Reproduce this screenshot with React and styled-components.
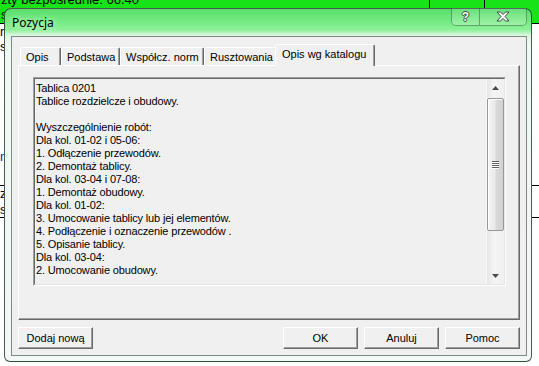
import styled, { createGlobalStyle } from "styled-components";

const GlobalStyle = createGlobalStyle`
  html, body {
    margin: 0;
    padding: 0;
  }
  body {
    width: 539px;
    height: 366px;
    overflow: hidden;
    background: #fff;
    font-family: "Liberation Sans", Arial, sans-serif;
  }
`;

const Desktop = styled.div`
  position: relative;
  width: 539px;
  height: 366px;
  overflow: hidden;
  background: #fff;
`;

const GreenBand = styled.div`
  height: 23px;
  background: #17e317;
  border-bottom: 1px solid #000;
  display: grid;
  grid-template-columns: 430px 55px 1fr;
`;

const BandCell = styled.div`
  border-right: ${(p) => (p.$last ? "none" : "1px solid #000")};
  overflow: hidden;
`;

const BandText = styled.div`
  font-size: 13px;
  line-height: 14px;
  margin-top: ${(p) => p.$top || 0}px;
  padding-left: 1px;
  color: #000;
  white-space: nowrap;
`;

const SheetRow = styled.div`
  height: ${(p) => p.$h}px;
  box-sizing: border-box;
  border-bottom: ${(p) => (p.$line ? "1px solid #000" : "none")};
  font-size: 13px;
  line-height: ${(p) => p.$h}px;
  color: ${(p) => p.$color || "#000"};
  white-space: nowrap;
`;

const Window = styled.div`
  position: absolute;
  left: 4px;
  top: 8px;
  width: 528px;
  height: 354px;
  box-sizing: border-box;
  border: 1px solid rgba(30, 50, 40, 0.8);
  border-radius: 7px 7px 6px 6px;
  background: linear-gradient(
    to bottom,
    #5ade6c 0px,
    #78ec86 14px,
    #8ef19a 21px,
    #d9f7de 26px,
    #eff8f2 34px,
    #f4f8f6 100%
  );
  display: flex;
  flex-direction: column;
  padding: 0 4px 5px 6px;
`;

const TitleBar = styled.div`
  height: 27px;
  display: flex;
  align-items: flex-start;
  justify-content: space-between;
`;

const Title = styled.div`
  font-family: "Noto Sans", "Open Sans", sans-serif;
  font-size: 12px;
  line-height: 16px;
  padding: 6px 0 0 1px;
  color: #000;
  text-shadow: 0 0 6px rgba(255, 255, 255, 0.9);
`;

const CaptionBox = styled.div`
  display: flex;
  margin: -1px 0 0 0;
  height: 18px;
  box-sizing: border-box;
  border: 1px solid rgba(40, 70, 50, 0.45);
  border-top: none;
  border-radius: 0 0 5px 5px;
  background: linear-gradient(to bottom, rgba(255, 255, 255, 0.08), rgba(255, 255, 255, 0.25));
  overflow: hidden;
`;

const CaptionButton = styled.div`
  width: ${(p) => p.$w}px;
  display: flex;
  align-items: center;
  justify-content: center;
  border-right: ${(p) => (p.$last ? "none" : "1px solid rgba(40, 70, 50, 0.45)")};
  font-family: "Liberation Sans", Arial, sans-serif;
  font-weight: bold;
  font-size: 12px;
  color: #fff;
  text-shadow: 1px 0 0 #3a4a40, -1px 0 0 #3a4a40, 0 1px 0 #3a4a40, 0 -1px 0 #3a4a40;
`;

const Client = styled.div`
  flex: 1;
  display: flex;
  flex-direction: column;
  background: #f0f0f0;
  border: 1px solid #7d8c83;
  padding: 7px 6px 6px 6px;
  font-family: "Liberation Sans", Arial, sans-serif;
  font-size: 11px;
  color: #000;
`;

const TabStrip = styled.div`
  height: 21px;
  display: flex;
  align-items: flex-end;
  padding-left: 2px;
  position: relative;
  z-index: 1;
`;

const Tab = styled.div`
  width: ${(p) => p.$w}px;
  height: ${(p) => (p.$active ? 22 : 18)}px;
  box-sizing: border-box;
  margin: 0 ${(p) => (p.$active ? -2 : 0)}px ${(p) => (p.$active ? -1 : 0)}px
    ${(p) => (p.$active ? -2 : 0)}px;
  background: #f0f0f0;
  border-top: 1px solid #fff;
  border-left: 1px solid #fff;
  border-right: 1px solid #696969;
  box-shadow: inset -1px 0 0 #a0a0a0;
  border-radius: 2px 2px 0 0;
  padding: ${(p) => (p.$active ? "3px 0 0 6px" : "3px 0 0 5px")};
  line-height: 13px;
  white-space: nowrap;
  position: relative;
  z-index: ${(p) => (p.$active ? 2 : 1)};
`;

const Panel = styled.div`
  height: 255px;
  box-sizing: border-box;
  border-top: 1px solid #fff;
  border-left: 1px solid #fff;
  border-right: 1px solid #696969;
  border-bottom: 1px solid #696969;
  box-shadow: inset -1px -1px 0 #a0a0a0;
  padding: 11px 0 0 14px;
`;

const MemoBox = styled.div`
  width: 473px;
  height: 209px;
  box-sizing: border-box;
  border-top: 1px solid #a0a0a0;
  border-left: 1px solid #a0a0a0;
  border-right: 1px solid #fff;
  border-bottom: 1px solid #fff;
  display: flex;
`;

const MemoInner = styled.div`
  flex: 1;
  display: flex;
  border-top: 1px solid #696969;
  border-left: 1px solid #696969;
  border-right: 1px solid #e3e3e3;
  border-bottom: 1px solid #e3e3e3;
  background: #f0f0f0;
  min-width: 0;
`;

const MemoText = styled.div`
  flex: 1;
  padding: 3px 0 0 1px;
  line-height: 13px;
  letter-spacing: -0.15px;
  white-space: pre;
  overflow: hidden;
`;

const ScrollBar = styled.div`
  width: 17px;
  display: flex;
  flex-direction: column;
  background: linear-gradient(to right, #e6e6e6, #f4f4f4 40%, #f0f0f0);
  border-left: 1px solid #f8f8f8;
`;

const ScrollArrow = styled.div`
  height: 17px;
  display: flex;
  align-items: center;
  justify-content: center;
`;

const ScrollTrack = styled.div`
  flex: 1;
  display: flex;
  flex-direction: column;
  padding-top: 2px;
`;

const Thumb = styled.div`
  height: 133px;
  box-sizing: border-box;
  border: 1px solid #979797;
  border-radius: 2px;
  background: linear-gradient(to right, #f4f4f4 0%, #eaeaea 45%, #d9d9d9 55%, #d2d2d2 100%);
  box-shadow: inset 1px 1px 0 #fff;
  display: flex;
  align-items: center;
  justify-content: center;
`;

const Grip = styled.div`
  width: 7px;
  display: flex;
  flex-direction: column;
  gap: 1px;
`;

const GripLine = styled.div`
  height: 1px;
  background: #5f5f5f;
  box-shadow: 0 1px 0 #fff;
`;

const ButtonRow = styled.div`
  margin-top: 7px;
  display: flex;
  gap: 6px;
`;

const Button = styled.div`
  width: 75px;
  height: 22px;
  box-sizing: border-box;
  border-top: 1px solid #fff;
  border-left: 1px solid #fff;
  border-right: 1px solid #696969;
  border-bottom: 1px solid #696969;
  box-shadow: inset -1px -1px 0 #a0a0a0;
  background: #f0f0f0;
  display: flex;
  align-items: center;
  justify-content: center;
  line-height: 13px;
  margin-left: ${(p) => (p.$push ? "auto" : "0")};
`;

const memo = `Tablica 0201
Tablice rozdzielcze i obudowy.

Wyszczególnienie robót:
Dla kol. 01-02 i 05-06:
1. Odłączenie przewodów.
2. Demontaż tablicy.
Dla kol. 03-04 i 07-08:
1. Demontaż obudowy.
Dla kol. 01-02:
3. Umocowanie tablicy lub jej elementów.
4. Podłączenie i oznaczenie przewodów .
5. Opisanie tablicy.
Dla kol. 03-04:
2. Umocowanie obudowy.`;

const tabs = [
  { label: "Opis", w: 41 },
  { label: "Podstawa", w: 59 },
  { label: "Współcz. norm", w: 84 },
  { label: "Rusztowania", w: 73 },
  { label: "Opis wg katalogu", w: 100, active: true },
];

const Arrow = ({ down }) => (
  <svg width="7" height="4" viewBox="0 0 7 4">
    <path d={down ? "M0 0 L7 0 L3.5 4 Z" : "M0 4 L7 4 L3.5 0 Z"} fill="#4a4a4a" />
  </svg>
);

const CloseGlyph = () => (
  <svg width="14" height="11" viewBox="0 0 14 11">
    <path
      d="M1 1 H4.5 L7 3.6 L9.5 1 H13 L9 5.5 L13 10 H9.5 L7 7.4 L4.5 10 H1 L5 5.5 Z"
      fill="#fff"
      stroke="#3a4a40"
      strokeWidth="1"
      strokeLinejoin="round"
    />
  </svg>
);

const App = () => (
  <Desktop>
    <GlobalStyle />
    <GreenBand>
      <BandCell>
        <BandText $top={-7}>zty bezpośrednie: 66.40</BandText>
        <BandText $top={1}>s</BandText>
      </BandCell>
      <BandCell />
      <BandCell $last />
    </GreenBand>
    <SheetRow $h={15}>r</SheetRow>
    <SheetRow $h={15}>s</SheetRow>
    <SheetRow $h={95} />
    <SheetRow $h={15} $color="#1a2a80">n</SheetRow>
    <SheetRow $h={22} $line />
    <SheetRow $h={15}>z</SheetRow>
    <SheetRow $h={17} $line>s</SheetRow>

    <Window>
      <TitleBar>
        <Title>Pozycja</Title>
        <CaptionBox>
          <CaptionButton $w={27}>?</CaptionButton>
          <CaptionButton $w={46} $last>
            <CloseGlyph />
          </CaptionButton>
        </CaptionBox>
      </TitleBar>
      <Client>
        <TabStrip>
          {tabs.map((t) => (
            <Tab key={t.label} $w={t.w} $active={t.active}>
              {t.label}
            </Tab>
          ))}
        </TabStrip>
        <Panel>
          <MemoBox>
            <MemoInner>
              <MemoText>{memo}</MemoText>
              <ScrollBar>
                <ScrollArrow>
                  <Arrow />
                </ScrollArrow>
                <ScrollTrack>
                  <Thumb>
                    <Grip>
                      <GripLine />
                      <GripLine />
                      <GripLine />
                      <GripLine />
                    </Grip>
                  </Thumb>
                </ScrollTrack>
                <ScrollArrow>
                  <Arrow down />
                </ScrollArrow>
              </ScrollBar>
            </MemoInner>
          </MemoBox>
        </Panel>
        <ButtonRow>
          <Button>Dodaj nową</Button>
          <Button $push>OK</Button>
          <Button>Anuluj</Button>
          <Button>Pomoc</Button>
        </ButtonRow>
      </Client>
    </Window>
  </Desktop>
);

export default App;
